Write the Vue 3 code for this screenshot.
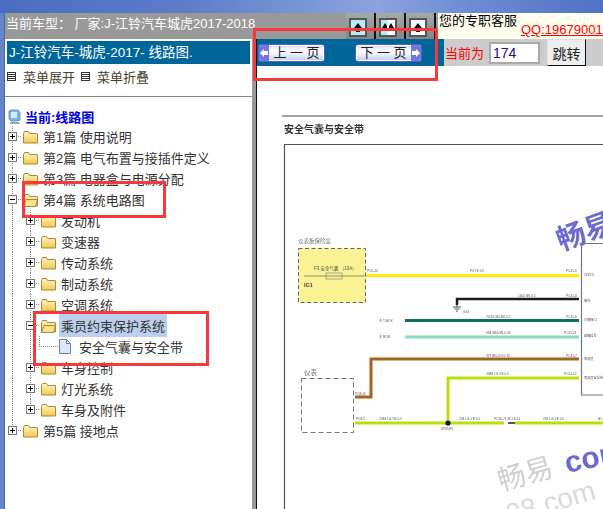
<script setup>
const tree = [
  { label: '第1篇 使用说明', level: 0, state: 'plus' },
  { label: '第2篇 电气布置与接插件定义', level: 0, state: 'plus' },
  { label: '第3篇 电器盒与电源分配', level: 0, state: 'plus' },
  { label: '第4篇 系统电路图', level: 0, state: 'minus', open: true },
  { label: '发动机', level: 1, state: 'plus' },
  { label: '变速器', level: 1, state: 'plus' },
  { label: '传动系统', level: 1, state: 'plus' },
  { label: '制动系统', level: 1, state: 'plus' },
  { label: '空调系统', level: 1, state: 'plus' },
  { label: '乘员约束保护系统', level: 1, state: 'minus', open: true, selected: true },
  { label: '安全气囊与安全带', level: 2, leaf: true },
  { label: '车身控制', level: 1, state: 'plus' },
  { label: '灯光系统', level: 1, state: 'plus' },
  { label: '车身及附件', level: 1, state: 'plus' },
  { label: '第5篇 接地点', level: 0, state: 'plus', last: true },
];

const tools = [
  { fill: '#b9ecfa', split: false },
  { fill: '#b9ecfa', split: true },
  { fill: '#ffffff', split: false },
];

// wires of the circuit diagram, coordinates are page pixels
const wires = [
  { d: 'M365 275.5H578', color: '#ffee00', width: 3 },
  { d: 'M456 305V299H578', color: '#1c1c1c', width: 2.5 },
  { d: 'M404 320.5H578', color: '#0f7060', width: 3 },
  { d: 'M404 337H578', color: '#8fd8b8', width: 3 },
  { d: 'M354 397H370V359H578', color: '#a5641e', width: 3 },
  { d: 'M447 423V378H578', color: '#b5e20a', width: 3 },
  { d: 'M354 423H503M514 423H603', color: '#b5e20a', width: 3 },
];

const labels = [
  { x: 469, y: 272, t: 'F3 YE 0.5' },
  { x: 565, y: 272, t: 'PC41-5' },
  { x: 517, y: 297, t: '1450 BK 0.5' },
  { x: 565, y: 297, t: 'PC41-8' },
  { x: 485, y: 318, t: '70/34 GN-BU 0.5' },
  { x: 565, y: 318, t: 'PC41-6' },
  { x: 485, y: 334, t: '694 WH-GN 0.35' },
  { x: 563, y: 334, t: 'PC41-21' },
  { x: 485, y: 357, t: '327 BN-OG 0.35' },
  { x: 565, y: 357, t: 'PC41-7' },
  { x: 485, y: 375, t: '2388 LG-YE 0.5' },
  { x: 563, y: 375, t: 'PC41-12' },
  { x: 354, y: 395, t: 'PC8-10' },
  { x: 355, y: 420, t: 'PC8-5' },
  { x: 378, y: 420, t: '2384 LG-YE 0.5' },
  { x: 458, y: 420, t: '238 LG-YE 0.5' },
  { x: 493, y: 420, t: 'PC26-21 BC18-21' },
  { x: 542, y: 420, t: '238 LG-YE 0.5' },
  { x: 597, y: 420, t: 'BC' },
  { x: 440, y: 430, t: 'SP45(P)' },
  { x: 462, y: 313, t: 'G14' },
  { x: 366, y: 272, t: 'PC5-10' },
  { x: 583, y: 276, t: 'ON/T-5' },
  { x: 583, y: 302, t: '接地' },
  { x: 583, y: 321, t: '诊断接口' },
  { x: 583, y: 337, t: '碰撞信号' },
  { x: 583, y: 360, t: '驾驶员' },
  { x: 583, y: 379, t: '驾驶员安全带' },
  { x: 378, y: 322, t: '去 T-BOX' },
  { x: 378, y: 338, t: '去 BCM' },
];
</script>

<template>
  <div class="window">
    <div class="titlebar"></div>
    <div class="body">
      <div class="edge"></div>
      <div class="content">
        <div class="top-row">
          <div class="car-info">当前车型： 厂家:J-江铃汽车城虎2017-2018</div>
          <div class="tools">
            <div v-for="(tool, i) in tools" :key="i" class="tool">
              <svg width="18" height="19" viewBox="0 0 18 19">
                <rect x="1" y="1" width="16" height="17" :fill="tool.fill" stroke="#555" stroke-width="2" />
                <rect v-if="tool.split" x="9" y="2" width="7" height="15" fill="#fff" />
                <path v-if="tool.split" d="M6 5l-3 5h2v3h3V8zM12 5l3 5h-2v3h-3V8z" fill="#111" />
                <path v-else d="M9 5l-4 5h2v4h4v-4h2z" fill="#111" />
              </svg>
            </div>
          </div>
          <div class="service">
            <div class="service-title">您的专职客服</div>
            <a class="qq">QQ:196790017</a>
          </div>
        </div>

        <div class="main-row">
          <aside class="sidebar">
            <div class="side-head">J-江铃汽车-城虎-2017- 线路图.</div>
            <div class="menu-row">
              <span class="menu-icon"></span><span class="menu-text">菜单展开</span>
              <span class="menu-icon"></span><span class="menu-text">菜单折叠</span>
            </div>
            <div class="current">
              <svg width="13" height="16" viewBox="0 0 13 16">
                <path d="M2 1h8l2 2v8l-3 1H3L1 10V2z" fill="#6fb6ef" stroke="#7f93b5" />
                <path d="M3 3h6v6H3z" fill="#cfeaff" />
                <path d="M2 13h9l1 2H2z" fill="#9aa7b8" />
              </svg>
              <span>当前:线路图</span>
            </div>
            <div class="tree">
              <div v-for="node in tree" :key="node.label" class="node">
                <span v-if="node.level > 0" class="guide"></span>
                <span v-if="node.level > 1" class="guide"></span>
                <span v-if="node.leaf" class="elbow"></span>
                <span v-else class="expander" :class="{ 'no-below': node.last || (node.level === 1 && node.label === '车身及附件') }">
                  <span class="box" :class="node.state"></span>
                </span>
                <svg v-if="node.leaf" class="doc" width="12" height="15" viewBox="0 0 12 15">
                  <path d="M.5.5h7l4 4v10H.5z" fill="#dce8fa" stroke="#6f7fa8" />
                  <path d="M7.5.5v4h4z" fill="#fff" stroke="#6f7fa8" />
                </svg>
                <svg v-else class="folder" width="15" height="14" viewBox="0 0 15 14">
                  <defs>
                    <linearGradient id="fold" x1="0" y1="0" x2="0" y2="1">
                      <stop offset="0" stop-color="#fff6c4" />
                      <stop offset="1" stop-color="#f2c84e" />
                    </linearGradient>
                  </defs>
                  <path d="M.5 3.5l1-2h4l1 2h7.5a.5.5 0 0 1 .5.5v9h-14z" fill="url(#fold)" stroke="#a98a3c" />
                  <path v-if="node.open" d="M3 6.500h11.500l-2 7H.5z" fill="#fbe28a" stroke="#a98a3c" />
                </svg>
                <span class="node-label" :class="{ selected: node.selected, 'leaf-label': node.leaf }">{{ node.label }}</span>
              </div>
            </div>
          </aside>

          <div class="divider"></div>

          <main class="page">
            <div class="toolbar">
              <div class="pager">
                <button class="page-btn">
                  <span class="arrow">
                    <svg width="8" height="8" viewBox="0 0 8 8"><path d="M0 4l4-4v2h4v4H4v2z" fill="#fff" /></svg>
                  </span>
                  <span class="btn-text">上 一 页</span>
                </button>
                <button class="page-btn">
                  <span class="btn-text">下 一 页</span>
                  <span class="arrow">
                    <svg width="8" height="8" viewBox="0 0 8 8"><path d="M8 4L4 0v2H0v4h4v2z" fill="#fff" /></svg>
                  </span>
                </button>
              </div>
              <div class="jump">
                <span class="jump-label">当前为</span>
                <input class="jump-input" value="174" />
                <button class="jump-btn">跳转</button>
              </div>
            </div>

            <svg class="diagram" width="347" height="443" viewBox="256 66 347 443">
              <path d="M281 116H603" stroke="#444" stroke-width="1.2" fill="none" />
              <text x="283" y="133" class="title">安全气囊与安全带</text>
              <path d="M283.500 509V144.500H603" stroke="#555" stroke-width="1.2" fill="none" />

              <text x="297" y="243" class="grey-label">仪表板保险盒</text>
              <rect x="297.500" y="248.500" width="67" height="54" fill="#fbf294" stroke="#666" stroke-dasharray="4 2.5" />
              <text x="313" y="270" class="small">F3 安全气囊 （10A）</text>
              <path d="M303 276H364" stroke="#555" stroke-width=".6" />
              <rect x="325" y="273" width="16" height="6" fill="none" stroke="#777" stroke-width=".6" />
              <text x="303" y="287" class="ig">IG1</text>

              <text x="303" y="375" class="grey-label big">仪表</text>
              <rect x="300.500" y="378.500" width="52" height="54" fill="none" stroke="#777" stroke-dasharray="5 3" />

              <path v-for="wire in wires" :key="wire.d" :d="wire.d" :stroke="wire.color" :stroke-width="wire.width" fill="none" />
              <path d="M507 423h7" stroke="#555" stroke-width="2" />
              <circle cx="447" cy="423" r="2.6" fill="#111" />
              <path d="M456 305v2M452 307h8M453.500 309h5M455 311h2" stroke="#222" stroke-width=".8" />
              <path d="M603 243.500H580.500V395H603" stroke="#777" stroke-width="1.2" fill="none" />

              <text v-for="label in labels" :key="label.x + label.t" :x="label.x" :y="label.y" class="wire-label">{{ label.t }}</text>

              <text x="560" y="251" class="mark-blue" transform="rotate(-20 560 251)">畅易</text>
              <text x="566" y="473" class="mark-com" transform="rotate(-12 566 473)">com</text>
              <text x="500" y="491" class="mark-grey" transform="rotate(-16 500 491)">畅易</text>
              <text x="508" y="524" class="mark-url" transform="rotate(-16 508 524)">08.com</text>
            </svg>
          </main>
        </div>
      </div>
    </div>

    <div class="note note-pager"></div>
    <div class="note note-chapter"></div>
    <div class="note note-system"></div>
  </div>
</template>

<style scoped>
.window {
  position: relative;
  width: 603px;
  height: 509px;
  overflow: hidden;
  display: flex;
  flex-direction: column;
  background: #fff;
  font-family: "Liberation Sans", "Noto Sans CJK SC", sans-serif;
  font-size: 13px;
  color: #333;
}

.titlebar {
  height: 13px;
  flex: none;
  background: linear-gradient(90deg, #4a6dbf 0%, #5c7cc9 30%, #8ba4de 62%, #6b88d0 80%, #4f72c4 100%);
}

.body {
  flex: 1;
  display: flex;
  min-height: 0;
}

.edge {
  width: 4px;
  flex: none;
  background: #6884c8;
  border-right: 1px solid #4a66ac;
}

.content {
  flex: 1;
  min-width: 0;
  display: flex;
  flex-direction: column;
}

.top-row {
  height: 26px;
  flex: none;
  display: flex;
  background: #999;
}

.car-info {
  width: 340px;
  flex: none;
  padding: 2px 0 0 1px;
  color: #fff;
  font-size: 13px;
  line-height: 18px;
  white-space: nowrap;
}

.tools {
  width: 92px;
  flex: none;
  display: flex;
  background: linear-gradient(#a8a8a8, #858585);
}

.tool {
  width: 30px;
  flex: none;
  padding: 5px 0 0 3px;
  box-sizing: border-box;
  border-right: 2px solid #111;
  line-height: 0;
}

.service {
  flex: 1;
  background: #fffff0;
  color: #000;
  white-space: nowrap;
  overflow: hidden;
}

.service-title {
  padding-left: 1px;
  font-size: 13px;
  line-height: 16px;
  height: 10px;
}

.qq {
  display: block;
  margin-left: 83px;
  color: #f00;
  font-size: 13px;
  line-height: 13px;
  text-decoration: underline;
}

.main-row {
  flex: 1;
  display: flex;
  min-height: 0;
}

.sidebar {
  width: 247px;
  flex: none;
  background: #fff;
  display: flex;
  flex-direction: column;
  padding-top: 2px;
}

.side-head {
  height: 23px;
  margin: 0 2px 0 2px;
  padding-left: 2px;
  background: #006699;
  color: #fff;
  font-size: 13.5px;
  line-height: 23px;
  white-space: nowrap;
}

.menu-row {
  height: 24px;
  flex: none;
  display: flex;
  align-items: center;
  border-bottom: 1px solid #888;
  padding: 0 0 8px 2px;
}

.menu-icon {
  width: 7px;
  height: 7px;
  flex: none;
  border: 1px solid #333;
  background: repeating-linear-gradient(#fff 0 1px, #333 1px 2px);
}

.menu-text {
  width: 52px;
  margin: 0 6px 0 7px;
  color: #4a4030;
  font-size: 13px;
  white-space: nowrap;
}

.current {
  height: 19px;
  flex: none;
  margin-top: 10px;
  display: flex;
  align-items: center;
  gap: 4px;
  padding-left: 3px;
  color: #0000e0;
  font-size: 13px;
  font-weight: 700;
}

.tree {
  margin-left: -2px;
}

.node {
  height: 21px;
  display: flex;
  align-items: center;
  white-space: nowrap;
}

.guide,
.expander,
.elbow {
  position: relative;
  width: 18px;
  height: 21px;
  flex: none;
}

.guide {
  background: repeating-linear-gradient(#888 0 1px, transparent 1px 2px) 9px 0 / 1px 100% no-repeat;
}

.expander {
  display: flex;
  align-items: center;
  justify-content: center;
  background:
    repeating-linear-gradient(#888 0 1px, transparent 1px 2px) 9px 0 / 1px 100% no-repeat,
    repeating-linear-gradient(90deg, #888 0 1px, transparent 1px 2px) 9px 10px / 9px 1px no-repeat;
}

.expander.no-below {
  background:
    repeating-linear-gradient(#888 0 1px, transparent 1px 2px) 9px 0 / 1px 10px no-repeat,
    repeating-linear-gradient(90deg, #888 0 1px, transparent 1px 2px) 9px 10px / 9px 1px no-repeat;
}

.elbow {
  width: 20px;
  background:
    repeating-linear-gradient(#888 0 1px, transparent 1px 2px) 0 0 / 1px 11px no-repeat,
    repeating-linear-gradient(90deg, #888 0 1px, transparent 1px 2px) 0 10px / 20px 1px no-repeat;
}

.box {
  width: 7px;
  height: 7px;
  border: 1px solid #777;
  background: #fff;
  position: relative;
}

.box.plus,
.box.minus {
  background:
    linear-gradient(#000, #000) center / 5px 1px no-repeat,
    #fff;
}

.box.plus {
  background:
    linear-gradient(#000, #000) center / 5px 1px no-repeat,
    linear-gradient(#000, #000) center / 1px 5px no-repeat,
    #fff;
}

.folder {
  flex: none;
  margin-left: 2px;
}

.doc {
  flex: none;
  margin-left: 0;
}

.node-label {
  margin-left: 5px;
  font-size: 13px;
  color: #333;
}

.leaf-label {
  margin-left: 8px;
}

.selected {
  margin-left: 3px;
  padding: 2px 2px;
  background: #bcd0ee;
}

.divider {
  width: 4px;
  flex: none;
  background: #999;
  border-right: 1px solid #111;
}

.page {
  flex: 1;
  min-width: 0;
  display: flex;
  flex-direction: column;
}

.toolbar {
  height: 27px;
  flex: none;
  display: flex;
}

.pager {
  width: 187px;
  flex: none;
  display: flex;
  align-items: center;
  gap: 30px;
  padding-left: 1px;
  box-sizing: border-box;
  background: #006699;
}

.page-btn {
  width: 67px;
  height: 18px;
  flex: none;
  padding: 0;
  display: flex;
  align-items: center;
  justify-content: space-between;
  border: 1px solid #5b63b8;
  border-radius: 3px;
  box-shadow: inset 0 0 0 1px #fff;
  background: linear-gradient(#d9dcf8, #ffffff 40%, #c4c8f2);
  color: #222;
  font-family: inherit;
  font-size: 13px;
  line-height: 16px;
  overflow: hidden;
}

.btn-text {
  flex: 1;
  text-align: center;
  white-space: nowrap;
}

.arrow {
  width: 10px;
  height: 16px;
  flex: none;
  display: flex;
  align-items: center;
  justify-content: center;
  background: #6e78e0;
}

.jump {
  flex: 1;
  display: flex;
  align-items: center;
  background: #ccc;
}

.jump-label {
  width: 45px;
  flex: none;
  padding-left: 1px;
  box-sizing: border-box;
  color: #f00;
  font-size: 13px;
  white-space: nowrap;
}

.jump-input {
  width: 51px;
  height: 22px;
  flex: none;
  box-sizing: border-box;
  padding: 0 2px;
  border: 2px solid #aaa;
  background: #fff;
  color: #2a0a80;
  font-family: inherit;
  font-size: 14px;
}

.jump-btn {
  width: 39px;
  height: 27px;
  flex: none;
  margin-left: 7px;
  padding: 0;
  border: 1px solid #111;
  border-left-color: #ddd;
  border-top-color: #ddd;
  background: #eee;
  color: #222;
  font-family: inherit;
  font-size: 14px;
}

.diagram {
  display: block;
  flex: none;
  filter: blur(0.3px);
}

.title {
  font-size: 10px;
  font-weight: 700;
  fill: #333;
}

.grey-label {
  font-size: 5.5px;
  fill: #777;
}

.grey-label.big {
  font-size: 6.5px;
}

.small {
  font-size: 4.5px;
  fill: #555;
}

.ig {
  font-size: 5.5px;
  font-weight: 700;
  fill: #444;
}

.wire-label {
  font-size: 3.2px;
  fill: #555;
}

.mark-blue {
  font-size: 29px;
  font-weight: 700;
  fill: #6b6bd2;
}

.mark-com {
  font-size: 30px;
  font-weight: 700;
  fill: #6b6bd2;
}

.mark-grey {
  font-size: 28px;
  fill: #cfcfcf;
}

.mark-url {
  font-size: 28px;
  fill: #dadada;
}

.note {
  position: absolute;
  box-sizing: border-box;
  border: 3px solid #f63a3a;
}

.note-pager {
  left: 253px;
  top: 28px;
  width: 185px;
  height: 53px;
}

.note-chapter {
  left: 22px;
  top: 181px;
  width: 144px;
  height: 37px;
}

.note-system {
  left: 33px;
  top: 311px;
  width: 176px;
  height: 55px;
}
</style>
